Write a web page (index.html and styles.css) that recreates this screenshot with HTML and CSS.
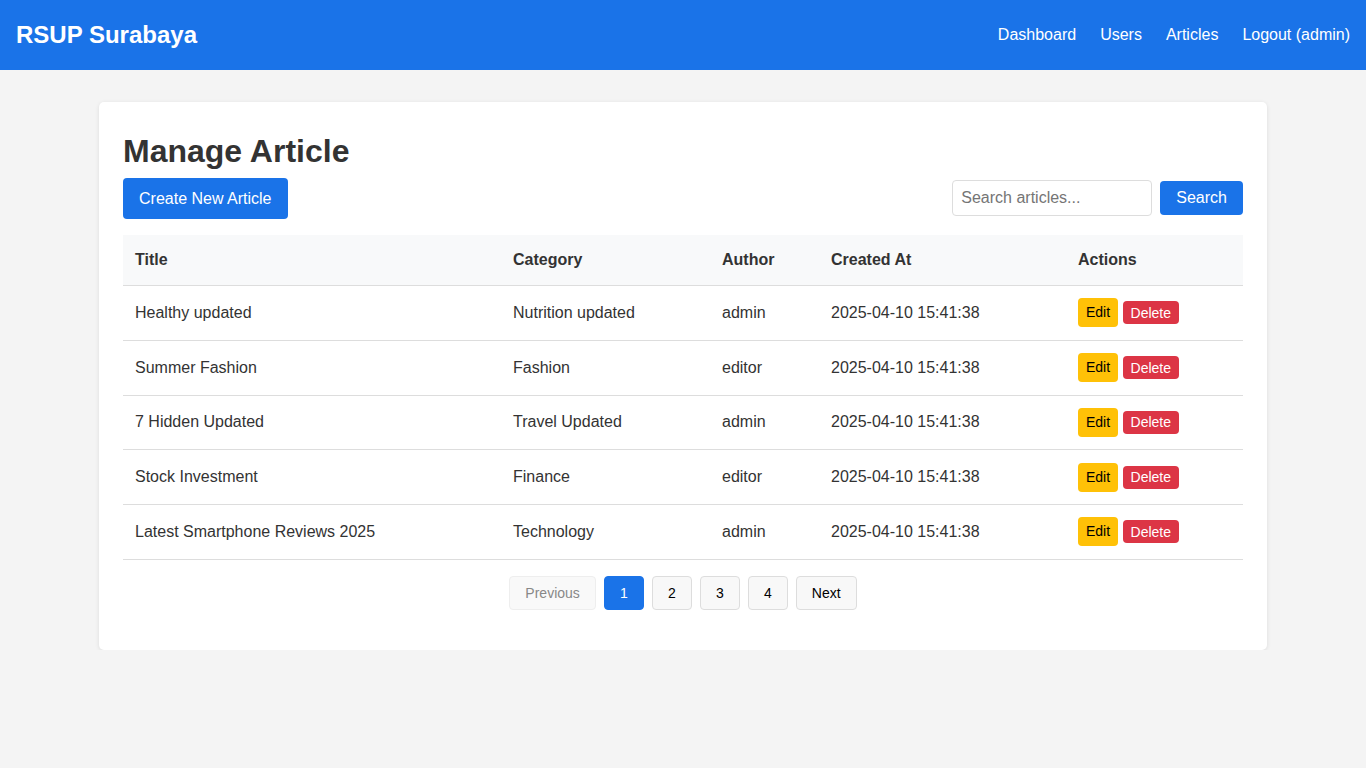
FILE: index.html
```html
<!DOCTYPE html>
<html lang="en">
<head>
<meta charset="utf-8">
<title>Manage Article - RSUP Surabaya</title>
<link rel="stylesheet" href="styles.css">
</head>
<body>
<header class="navbar">
  <div class="brand">RSUP Surabaya</div>
  <nav class="nav-links">
    <a href="#">Dashboard</a>
    <a href="#">Users</a>
    <a href="#">Articles</a>
    <a href="#">Logout (admin)</a>
  </nav>
</header>

<main class="card">
  <h1 class="title">Manage Article</h1>
  <div class="toolbar">
    <a href="#" class="btn btn-primary btn-create">Create New Article</a>
    <form class="search-form">
      <input type="text" class="search-input" placeholder="Search articles...">
      <button type="button" class="btn btn-primary btn-search">Search</button>
    </form>
  </div>

  <table class="articles">
    <colgroup>
      <col class="c-title">
      <col class="c-cat">
      <col class="c-author">
      <col class="c-date">
      <col class="c-actions">
    </colgroup>
    <thead>
      <tr>
        <th>Title</th>
        <th>Category</th>
        <th>Author</th>
        <th>Created At</th>
        <th>Actions</th>
      </tr>
    </thead>
    <tbody>
      <tr>
        <td>Healthy updated</td>
        <td>Nutrition updated</td>
        <td>admin</td>
        <td>2025-04-10 15:41:38</td>
        <td><a href="#" class="btn-edit">Edit</a> <button type="button" class="btn-delete">Delete</button></td>
      </tr>
      <tr>
        <td>Summer Fashion</td>
        <td>Fashion</td>
        <td>editor</td>
        <td>2025-04-10 15:41:38</td>
        <td><a href="#" class="btn-edit">Edit</a> <button type="button" class="btn-delete">Delete</button></td>
      </tr>
      <tr>
        <td>7 Hidden Updated</td>
        <td>Travel Updated</td>
        <td>admin</td>
        <td>2025-04-10 15:41:38</td>
        <td><a href="#" class="btn-edit">Edit</a> <button type="button" class="btn-delete">Delete</button></td>
      </tr>
      <tr>
        <td>Stock Investment</td>
        <td>Finance</td>
        <td>editor</td>
        <td>2025-04-10 15:41:38</td>
        <td><a href="#" class="btn-edit">Edit</a> <button type="button" class="btn-delete">Delete</button></td>
      </tr>
      <tr>
        <td>Latest Smartphone Reviews 2025</td>
        <td>Technology</td>
        <td>admin</td>
        <td>2025-04-10 15:41:38</td>
        <td><a href="#" class="btn-edit">Edit</a> <button type="button" class="btn-delete">Delete</button></td>
      </tr>
    </tbody>
  </table>

  <div class="pagination">
    <span class="page disabled">Previous</span>
    <a href="#" class="page active">1</a>
    <a href="#" class="page">2</a>
    <a href="#" class="page">3</a>
    <a href="#" class="page">4</a>
    <a href="#" class="page">Next</a>
  </div>
</main>
</body>
</html>
```

FILE: styles.css
```css
* {
  box-sizing: border-box;
}

body {
  margin: 0;
  background: #f4f4f4;
  font-family: "Liberation Sans", Arial, sans-serif;
  color: #333;
}

a {
  text-decoration: none;
}

.navbar {
  height: 70px;
  background: #1a73e8;
  color: #fff;
  display: flex;
  align-items: center;
  justify-content: space-between;
  padding: 0 16px;
}

.brand {
  font-size: 24px;
  font-weight: bold;
}

.nav-links {
  display: flex;
  gap: 24px;
  font-size: 16px;
}

.nav-links a {
  color: #fff;
}

.card {
  width: 1168px;
  margin: 32px auto 0;
  background: #fff;
  border-radius: 5px;
  box-shadow: 0 1px 4px rgba(0, 0, 0, 0.1);
  padding: 24px 24px 40px;
}

.title {
  font-size: 32px;
  font-weight: bold;
  margin: 7px 0 8px;
  color: #333;
}

.toolbar {
  display: flex;
  justify-content: space-between;
  align-items: flex-start;
  margin-bottom: 16px;
}

.btn {
  display: inline-block;
  border: none;
  border-radius: 4px;
  font-family: inherit;
  font-size: 16px;
  cursor: pointer;
}

.btn-primary {
  background: #1a73e8;
  color: #fff;
}

.btn-create {
  padding: 11px 16px;
  line-height: 19px;
}

.search-form {
  display: flex;
  align-items: center;
  gap: 8px;
  margin-top: 2px;
}

.search-input {
  width: 200px;
  height: 36px;
  padding: 8px;
  border: 1px solid #ddd;
  border-radius: 4px;
  font-family: inherit;
  font-size: 16px;
  color: #333;
}

.search-input::placeholder {
  color: #757575;
}

.btn-search {
  padding: 8px 16px;
  height: 34px;
  line-height: 18px;
}

.articles {
  width: 100%;
  border-collapse: collapse;
  table-layout: fixed;
  font-size: 16px;
}

.c-title { width: 378px; }
.c-cat { width: 209px; }
.c-author { width: 109px; }
.c-date { width: 247px; }
.c-actions { width: 177px; }

.articles th {
  background: #f8f9fa;
  text-align: left;
  font-weight: bold;
  padding: 16px 12px;
  line-height: 18px;
  border-bottom: 1px solid #ddd;
  color: #333;
}

.articles td {
  padding: 12px;
  border-bottom: 1px solid #ddd;
  vertical-align: middle;
  color: #333;
  height: 54.75px;
}

.btn-edit {
  display: inline-block;
  background: #ffc107;
  color: #000;
  font-size: 14px;
  line-height: 16px;
  padding: 6px 8px 7px;
  border-radius: 4px;
  vertical-align: middle;
}

.btn-delete {
  display: inline-block;
  background: #dc3545;
  color: #fff;
  border: none;
  font-family: inherit;
  font-size: 14px;
  line-height: 16px;
  padding: 3.5px 8px;
  border-radius: 4px;
  vertical-align: middle;
  cursor: pointer;
}

.pagination {
  display: flex;
  justify-content: center;
  gap: 8px;
  margin-top: 16px;
}

.page {
  display: inline-block;
  font-size: 14px;
  line-height: 16px;
  padding: 8px 15px;
  min-width: 40px;
  text-align: center;
  border: 1px solid #ddd;
  border-radius: 4px;
  background: #f8f8f8;
  color: #000;
}

.page.active {
  background: #1a73e8;
  border-color: #1a73e8;
  color: #fff;
}

.page.disabled {
  background: #f9f9f9;
  border-color: #eee;
  color: #888;
}
```
